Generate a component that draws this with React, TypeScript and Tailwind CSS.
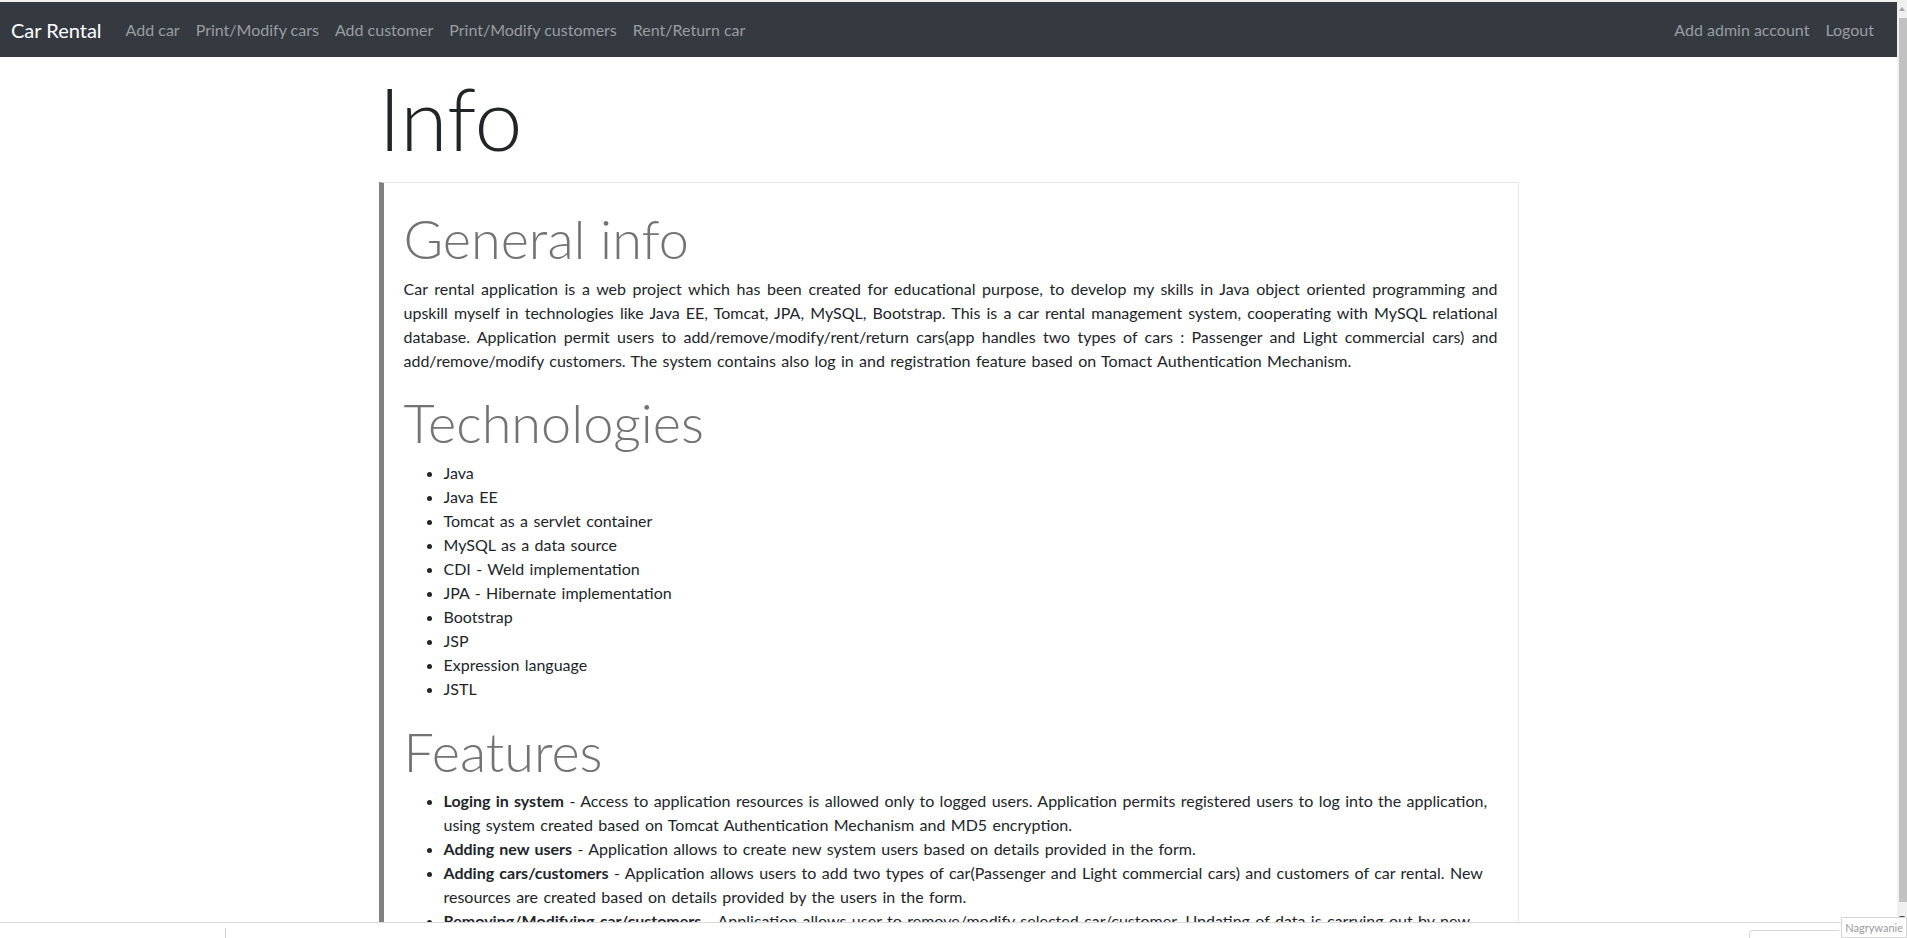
import React from "react";

const navLinks = [
  "Add car",
  "Print/Modify cars",
  "Add customer",
  "Print/Modify customers",
  "Rent/Return car",
];

const technologies = [
  "Java",
  "Java EE",
  "Tomcat as a servlet container",
  "MySQL as a data source",
  "CDI - Weld implementation",
  "JPA - Hibernate implementation",
  "Bootstrap",
  "JSP",
  "Expression language",
  "JSTL",
];

const features = [
  {
    title: "Loging in system",
    text: "Access to application resources is allowed only to logged users. Application permits registered users to log into the application, using system created based on Tomcat Authentication Mechanism and MD5 encryption.",
  },
  {
    title: "Adding new users",
    text: "Application allows to create new system users based on details provided in the form.",
  },
  {
    title: "Adding cars/customers",
    text: "Application allows users to add two types of car(Passenger and Light commercial cars) and customers of car rental. New resources are created based on details provided by the users in the form.",
  },
  {
    title: "Removing/Modifying car/customers",
    text: "Application allows user to remove/modify selected car/customer. Updating of data is carrying out by new values provided by the users in the form.",
  },
  {
    title: "Renting/Returning cars",
    text: "Application allows users to rent and return selected cars for the customers of car rental.",
  },
];

const Navbar = () => {
  return (
    <nav className="h-[55px] bg-[#343a40] flex items-center pl-[11px] pr-[15px] shrink-0">
      <span className="text-[20px] text-white mr-4 leading-[30px]">Car Rental</span>
      {navLinks.map((link) => (
        <span key={link} className="px-2 text-[16px] text-[#9a9da0] leading-6">
          {link}
        </span>
      ))}
      <div className="ml-auto flex">
        <span className="px-2 text-[16px] text-[#9a9da0] leading-6">Add admin account</span>
        <span className="px-2 text-[16px] text-[#9a9da0] leading-6">Logout</span>
      </div>
    </nav>
  );
};

const Scrollbar = () => {
  return (
    <div className="w-[10px] shrink-0 bg-[#f0f0f0] flex flex-col items-center">
      <div className="h-[18px] flex items-center justify-center">
        <div className="w-0 h-0 border-l-[3px] border-r-[3px] border-b-[4px] border-l-transparent border-r-transparent border-b-[#a3a3a3]" />
      </div>
      <div className="w-[8px] h-[884px] ml-[2px] bg-[#c1c1c1]" />
      <div className="flex-1 flex items-end justify-center pb-[2px]">
        <div className="w-0 h-0 border-l-[3px] border-r-[3px] border-t-[4px] border-l-transparent border-r-transparent border-t-[#505050]" />
      </div>
    </div>
  );
};

const App = () => {
  return (
    <div className="w-[1907px] h-[938px] overflow-hidden bg-white relative flex flex-col font-['Lato','Liberation_Sans',sans-serif] text-[#212529]">
      <div className="flex flex-1 min-h-0">
        <div className="flex-1 min-w-0 flex flex-col overflow-hidden">
          <div className="h-[2px] bg-[#f2f2f2] shrink-0" />
          <Navbar />

          <main className="w-[1140px] mx-auto">
            <h1 className="text-[86px] font-light leading-[121px] mb-1">Info</h1>

            <div className="border border-[#e6e6e6] border-l-[5px] border-l-[#808080] pt-6 px-5 pb-5 [word-spacing:1.3px]">
              <h2 className="text-[54px] font-light leading-[1.2] text-[#737373] mb-[5px] [word-spacing:0px]">
                General info
              </h2>
              <p className="text-[16px] leading-6 text-justify mb-[18px]">
                Car rental application is a web project which has been created for educational purpose, to
                develop my skills in Java object oriented programming and upskill myself in technologies like
                Java EE, Tomcat, JPA, MySQL, Bootstrap. This is a car rental management system, cooperating
                with MySQL relational database. Application permit users to add/remove/modify/rent/return
                cars(app handles two types of cars : Passenger and Light commercial cars) and
                add/remove/modify customers. The system contains also log in and registration feature based on
                Tomact Authentication Mechanism.
              </p>

              <h2 className="text-[54px] font-light leading-[1.2] text-[#737373] mb-[5px] [word-spacing:0px]">
                Technologies
              </h2>
              <ul className="list-disc pl-10 mb-[19px] text-[16px] leading-6">
                {technologies.map((tech) => (
                  <li key={tech}>{tech}</li>
                ))}
              </ul>

              <h2 className="text-[54px] font-light leading-[1.2] text-[#737373] mb-[5px] [word-spacing:0px]">
                Features
              </h2>
              <ul className="list-disc pl-10 mb-4 text-[16px] leading-6">
                {features.map((feature) => (
                  <li key={feature.title}>
                    <b className="font-bold">{feature.title}</b> - {feature.text}
                  </li>
                ))}
              </ul>
            </div>
          </main>
        </div>
        <Scrollbar />
      </div>

      {/* bottom strip of the recorder window */}
      <div className="h-[16px] shrink-0 border-t border-[#dadada] bg-white flex items-end">
        <div className="ml-[225px] w-px h-[10px] bg-[#d0d0d0]" />
        <div className="ml-auto mr-[68px] w-[90px] h-[8px] border-t border-l border-[#d6d6d6] rounded-tl-[4px]" />
      </div>
      <div className="absolute right-0 bottom-0 h-[21px] px-[3px] border border-[#d6d6d6] bg-white text-[11px] leading-[19px] text-[#9a9a9a]">
        Nagrywanie
      </div>
    </div>
  );
};

export default App;
